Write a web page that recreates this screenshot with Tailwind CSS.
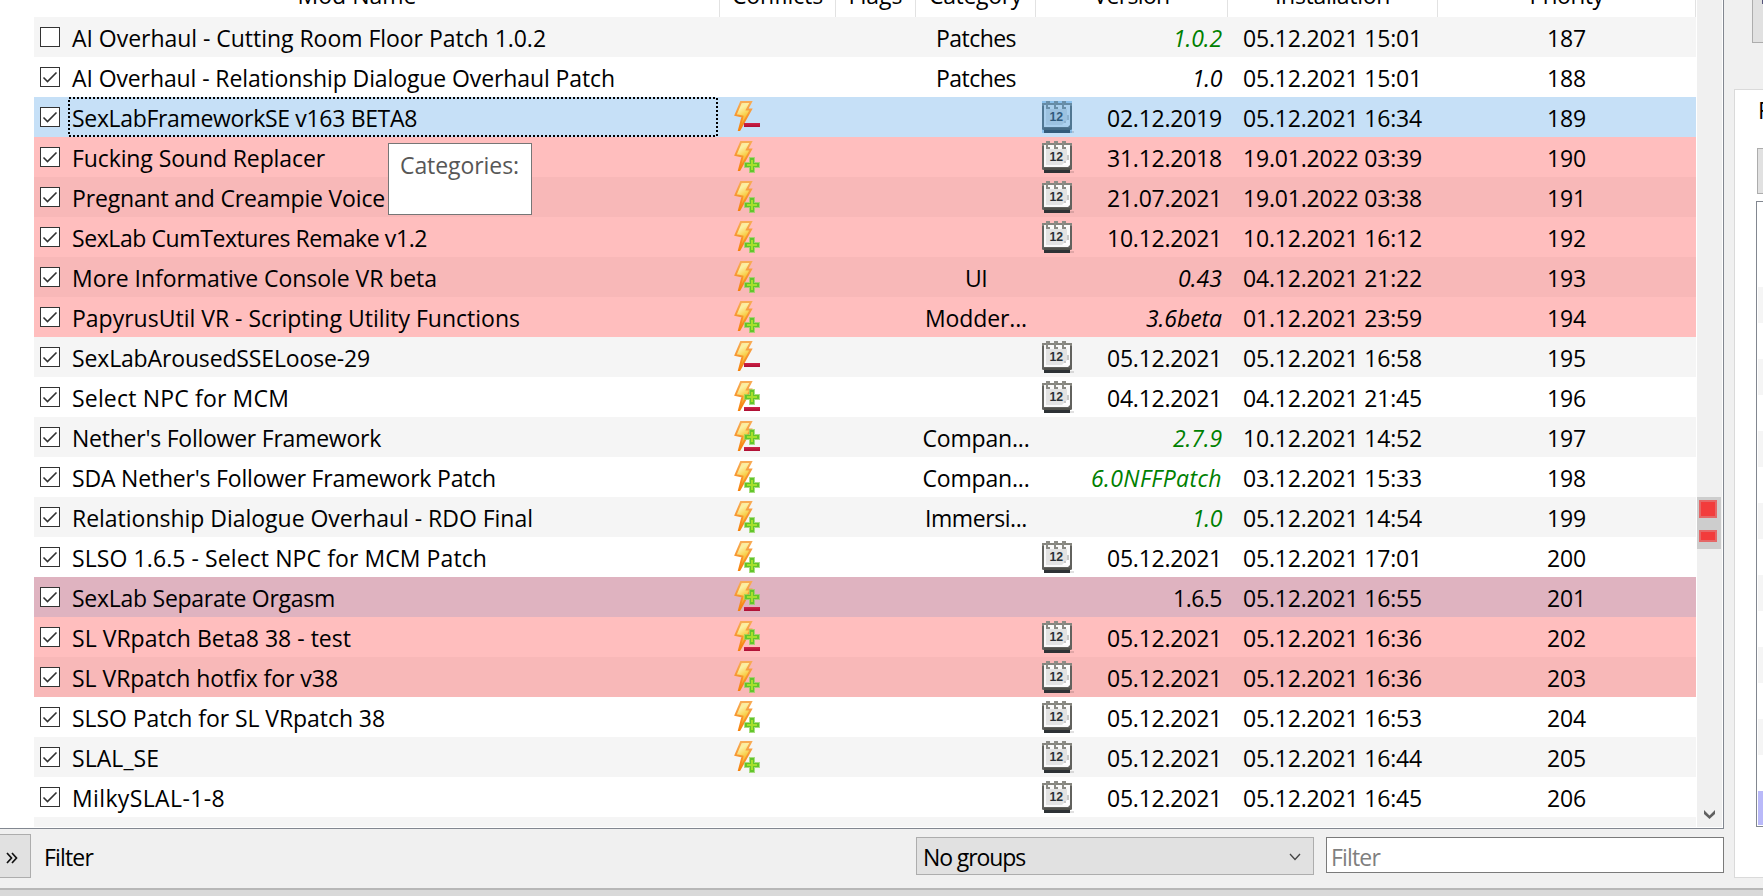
<!DOCTYPE html>
<html lang="en">
<head>
<meta charset="utf-8">
<title>Mod list</title>
<script src="https://cdn.jsdelivr.net/npm/@tailwindcss/browser@4"></script>
</head>
<body class="w-[1763px] h-[896px] overflow-hidden bg-[#f0f0f0] text-black text-[23px] whitespace-nowrap font-['Open_Sans','Noto_Sans',sans-serif]">
<svg class="absolute w-0 h-0">
  <defs>
    <linearGradient id="bolt" x1="0" y1="0" x2="0.35" y2="1"><stop offset="0" stop-color="#ffd98a"/><stop offset=".3" stop-color="#fbf0a4"/><stop offset=".6" stop-color="#f9cf4a"/><stop offset="1" stop-color="#f68a10"/></linearGradient>
    <linearGradient id="edge" x1="0" y1="0" x2="0" y2="1"><stop offset="0" stop-color="#f8ab55"/><stop offset="1" stop-color="#f6820c"/></linearGradient>
    <linearGradient id="minusFill" x1="0" y1="0" x2="0" y2="1"><stop offset="0" stop-color="#d02348"/><stop offset="1" stop-color="#ad0f34"/></linearGradient>
  </defs>
  <symbol id="i-bolt" viewBox="0 0 28 40"><path d="M7 5H17L13 12.5H17L5.5 33H5L8.5 19.5L1.5 18Z" fill="url(#bolt)" stroke="url(#edge)" stroke-width="2"/></symbol>
  <symbol id="i-minus" viewBox="0 0 16 4"><path d="M0 0H16V4H0Z" fill="url(#minusFill)"/></symbol>
  <symbol id="i-plus" viewBox="0 0 16 16"><path d="M5 0H11V5H16V11H11V16H5V11H0V5H5Z" fill="#8ed45a" fill-opacity=".75"/><path d="M6 1H10V6H15V10H10V15H6V10H1V6H6Z" fill="#62c52c"/><path d="M7 3H9V7H13V9H9V13H7V9H3V7H7Z" fill="#a6e02c"/></symbol>
  <symbol id="i-cal" viewBox="0 0 32 32">
    <path d="M2 29H28V32H2Z" fill="#2d3236"/><path d="M28 30H32V32H28Z" fill="#000" fill-opacity=".12"/>
    <rect x="0" y="2" width="30" height="27" rx="1.5" fill="#62625e"/>
    <path d="M0 2H30V5H0Z" fill="#85857e"/>
    <path d="M2 4H28V24L26 26H2Z" fill="#fafafa"/>
    <path d="M4 8H25V22L22 24H4Z" fill="#e3e3e3"/><path d="M20 24L27 17V24Z" fill="#fff"/><path d="M22 20H24V22H22ZM25 14H27V19H25Z" fill="#c8c8c8"/>
    <path d="M2 27H28V29H2Z" fill="#50504b"/>
    <path d="M8 1H5V7H8M16 1H13V7H16M24 1H21V7H24" fill="none" stroke="#8c8c86" stroke-width="2"/>
    <text x="7.4" y="20" font-family="Liberation Sans" font-weight="bold" font-size="12.3" letter-spacing="0" fill="#2c3136">12</text>
  </symbol>
</svg>

<div class="flex h-[888px]">
  <!-- mod list and its filter bar -->
  <main class="w-[1724px] flex flex-col">
    <section class="relative h-[829px] flex bg-white border-r border-b border-[#828790] overflow-hidden">
      <div class="w-[1697px] flex flex-col">
        <header class="h-[17px] flex leading-8 text-center">
          <div class="w-[720px] pr-[5px] border-r border-[#e2e2e2]"><div class="-mt-[21px]"><span data-w="119">Mod Name</span></div></div>
          <div class="w-[116px] border-r border-[#e2e2e2]"><div class="-mt-[21px]"><span data-w="91">Conflicts</span></div></div>
          <div class="w-[80px] border-r border-[#e2e2e2]"><div class="-mt-[21px]"><span data-w="54">Flags</span></div></div>
          <div class="w-[120px] border-r border-[#e2e2e2]"><div class="-mt-[21px]"><span data-w="93">Category</span></div></div>
          <div class="w-[192px] border-r border-[#e2e2e2]"><div class="-mt-[21px]"><span data-w="76">Version</span></div></div>
          <div class="w-[210px] border-r border-[#e2e2e2]"><div class="-mt-[21px]"><span data-w="115">Installation</span></div></div>
          <div class="w-[258px] border-r border-[#e2e2e2]"><div class="-mt-[21px]"><span data-w="74">Priority</span></div></div>
        </header>
        <div id="rows" class="ml-[34px] w-[1662px]"></div>
        <div class="ml-[34px] w-[1662px] h-[10px] bg-[#f5f5f5]"></div>
      </div>
      <!-- scrollbar -->
      <div class="w-[25px] h-[827px] bg-[#f0f0f0] flex flex-col justify-between">
        <div class="mt-[497px] w-6 h-[52px] bg-[#cdcdcd] flex flex-col items-center pt-[3px] gap-3 pr-[2px]">
          <div class="w-[18px] h-[18px] bg-[#f23c3c] border-2 border-[#e56767]"></div>
          <div class="w-[18px] h-3 bg-[#f23c3c] border-2 border-[#e56767]"></div>
        </div>
        <svg class="w-[25px] h-[18px]" viewBox="0 0 25 18"><path d="M7 1L12.500 6.500L18 1V5L12.500 10L7 5Z" fill="#606060"/></svg>
      </div>
      <!-- tooltip -->
      <div class="absolute left-[388px] top-[143px] w-[144px] h-[72px] bg-white border border-[#767676] text-[#575757] pl-[11px] pt-[5px] leading-8"><span data-w="119">Categories:</span></div>
    </section>
    <footer class="flex-1 flex items-start leading-8">
      <div class="mt-[5px] w-[31px] h-[44px] border border-l-0 border-[#adadad] bg-[#e1e1e1] flex items-center pl-[6px]">
        <svg class="w-3 h-3 mt-1" viewBox="0 0 12 12"><path d="M1 1L5.500 6L1 11M6 1L10.500 6L6 11" fill="none" stroke="#111" stroke-width="1.700"/></svg>
      </div>
      <div class="mt-[12px] ml-[13px] w-[872px]"><span data-w="49">Filter</span></div>
      <div class="mt-[8px] w-[398px] h-[38px] border border-[#adadad] bg-[#e1e1e1] flex justify-between pl-[6px] pr-[12px] pt-[3px]">
        <span data-w="102">No groups</span>
        <svg class="w-3 h-3 mt-[11px]" viewBox="0 0 12 12"><path d="M1 2L6 7.500L11 2" fill="none" stroke="#444" stroke-width="1.300"/></svg>
      </div>
      <div class="mt-[8px] ml-[12px] w-[398px] h-[36px] border border-[#7a7a7a] bg-white pl-[4px] pt-[3px] text-[#7f7f7f]"><span data-w="49">Filter</span></div>
    </footer>
  </main>
  <!-- edge of the right pane -->
  <aside class="w-[39px] h-[878px] flex flex-col overflow-hidden">
    <div class="ml-[28px] h-[43px] w-[40px] border border-t-0 border-[#adadad] bg-[#e1e1e1]"><div class="ml-[9px] mt-0 w-1 h-1 bg-[#55557a]"></div></div>
    <div class="mt-[46px] ml-[10px] w-[60px] h-[789px] border border-[#dadada] bg-white flex flex-col">
      <div class="h-[58px] pl-[23px] pt-[4px] leading-8">Filter</div>
      <div class="ml-[22px] h-[46px] border border-[#adadad] bg-[#e1e1e1]"></div>
      <div class="ml-[21px] mt-[7px] h-[626px] border border-[#828790] pl-px pt-[85px] pb-px flex flex-col gap-9">
        <div class="h-9 bg-[#f5f5f5]"></div><div class="h-9 bg-[#f5f5f5]"></div><div class="h-9 bg-[#f5f5f5]"></div><div class="h-9 bg-[#f5f5f5]"></div><div class="h-9 bg-[#f5f5f5]"></div><div class="h-9 bg-[#f5f5f5]"></div><div class="h-9 bg-[#f5f5f5]"></div>
        <div class="h-[34px] bg-[#b9b9f9]"></div>
      </div>
    </div>
  </aside>
</div>
<div class="h-2 border-t-2 border-[#b7b7b7] bg-[#d9d9d9]"></div>

<script>
const G = 'bg-[#f5f5f5]', W = 'bg-white', B = 'bg-[#c6e0f7]', P = 'bg-[#ffbebe]', D = 'bg-[#f8b8b8]', M = 'bg-[#dfb3c0]';
const OK = 'italic text-[#008000]', IT = 'italic', N = '';
// background, name, name width, conflict icons, category, category width, calendar, version, version style, version width, installation
const mods = [
 [G,'AI Overhaul - Cutting Room Floor Patch 1.0.2',474,'','Patches',80,0,'1.0.2',OK,49,'05.12.2021 15:01'],
 [W,'AI Overhaul - Relationship Dialogue Overhaul Patch',543,'','Patches',80,0,'1.0',IT,30,'05.12.2021 15:01'],
 [B,'SexLabFrameworkSE v163 BETA8',345,'-','',0,1,'02.12.2019',N,115,'05.12.2021 16:34'],
 [P,'Fucking Sound Replacer',253,'+','',0,1,'31.12.2018',N,115,'19.01.2022 03:39'],
 [D,'Pregnant and Creampie Voice',313,'+','',0,1,'21.07.2021',N,115,'19.01.2022 03:38'],
 [P,'SexLab CumTextures Remake v1.2',355,'+','',0,1,'10.12.2021',N,115,'10.12.2021 16:12'],
 [D,'More Informative Console VR beta',365,'+','UI',22,0,'0.43',IT,44,'04.12.2021 21:22'],
 [P,'PapyrusUtil VR - Scripting Utility Functions',448,'+','Modder...',102,0,'3.6beta',IT,76,'01.12.2021 23:59'],
 [G,'SexLabArousedSSELoose-29',298,'-','',0,1,'05.12.2021',N,115,'05.12.2021 16:58'],
 [W,'Select NPC for MCM',217,'+-','',0,1,'04.12.2021',N,115,'04.12.2021 21:45'],
 [G,"Nether's Follower Framework",309,'+-','Compan...',107,0,'2.7.9',OK,49,'10.12.2021 14:52'],
 [W,"SDA Nether's Follower Framework Patch",424,'+','Compan...',107,0,'6.0NFFPatch',OK,131,'03.12.2021 15:33'],
 [G,'Relationship Dialogue Overhaul - RDO Final',461,'+','Immersi...',102,0,'1.0',OK,30,'05.12.2021 14:54'],
 [W,'SLSO 1.6.5 - Select NPC for MCM Patch',415,'+','',0,1,'05.12.2021',N,115,'05.12.2021 17:01'],
 [M,'SexLab Separate Orgasm',263,'+-','',0,0,'1.6.5',N,49,'05.12.2021 16:55'],
 [P,'SL VRpatch Beta8 38 - test',279,'+-','',0,1,'05.12.2021',N,115,'05.12.2021 16:36'],
 [D,'SL VRpatch hotfix for v38',266,'+','',0,1,'05.12.2021',N,115,'05.12.2021 16:36'],
 [W,'SLSO Patch for SL VRpatch 38',313,'+','',0,1,'05.12.2021',N,115,'05.12.2021 16:53'],
 [G,'SLAL_SE',87,'+','',0,1,'05.12.2021',N,115,'05.12.2021 16:44'],
 [W,'MilkySLAL-1-8',153,'','',0,1,'05.12.2021',N,115,'05.12.2021 16:45']
];
function conflict(c) {
  if (!c) return '';
  const plus = c === '+' ? '<use href="#i-plus" x="10" y="20" width="16" height="16"/>' : c === '+-' ? '<use href="#i-plus" x="10" y="12" width="16" height="16"/>' : '';
  const minus = c === '-' ? '<use href="#i-minus" x="10" y="26" width="16" height="4"/>' : c === '+-' ? '<use href="#i-minus" x="10" y="30" width="16" height="4"/>' : '';
  return `<svg class="w-7 h-10" viewBox="0 0 28 40"><use href="#i-bolt" width="28" height="40"/>${minus}${plus}</svg>`;
}
document.getElementById('rows').innerHTML = mods.map((m, i) => `
<div class="h-10 flex ${m[0]}">
  <div class="w-[34px] pl-[6px] pt-[10px]"><svg class="w-5 h-5 block" viewBox="0 0 20 20"><rect x=".5" y=".5" width="19" height="19" fill="#fff" stroke="#333"/>${i ? '<path d="M3.500 10.500L7.500 14.500L16.500 5.500" fill="none" stroke="#333" stroke-width="1.600"/>' : ''}</svg></div>
  <div class="w-[652px] relative pl-[4px] pt-[2px] leading-[38px]"><span data-w="${m[2]}">${m[1]}</span>${i === 2 ? '<svg class="absolute left-0 top-0 w-[650px] h-10" viewBox="0 0 650 40"><rect x="1" y="1" width="648" height="38" fill="none" stroke="#000" stroke-width="2" stroke-dasharray="2 2"/></svg>' : ''}</div>
  <div class="w-[196px] pl-[14px]">${conflict(m[3])}</div>
  <div class="w-[120px] text-center pt-[2px] leading-[38px]">${m[4] ? `<span data-w="${m[5]}">${m[4]}</span>` : ''}</div>
  <div class="w-[186px] pl-[6px] flex justify-between"><div class="w-8 h-8 mt-1">${m[6] ? `<svg class="w-8 h-8" viewBox="0 0 32 32"><use href="#i-cal" width="32" height="32"/>${i === 2 ? '<path d="M0 0H30V32H0Z" fill="#3a94dc" fill-opacity=".42"/>' : ''}</svg>` : ''}</div><div class="pt-[2px] leading-[38px] ${m[8]}"><span data-w="${m[9]}">${m[7]}</span></div></div>
  <div class="w-[215px] pl-[21px] pt-[2px] leading-[38px]"><span data-w="179">${m[10]}</span></div>
  <div class="w-[259px] text-center pt-[2px] leading-[38px]"><span data-w="39">${187 + i}</span></div>
</div>`).join('');
const ctx = document.createElement('canvas').getContext('2d');
document.querySelectorAll('[data-w]').forEach(e => {
  ctx.font = (e.parentElement.classList.contains('italic') ? 'italic ' : '') + '23px "Open Sans"';
  e.style.letterSpacing = (e.dataset.w - ctx.measureText(e.textContent).width) / e.textContent.length + 'px';
});
</script>
</body>
</html>
